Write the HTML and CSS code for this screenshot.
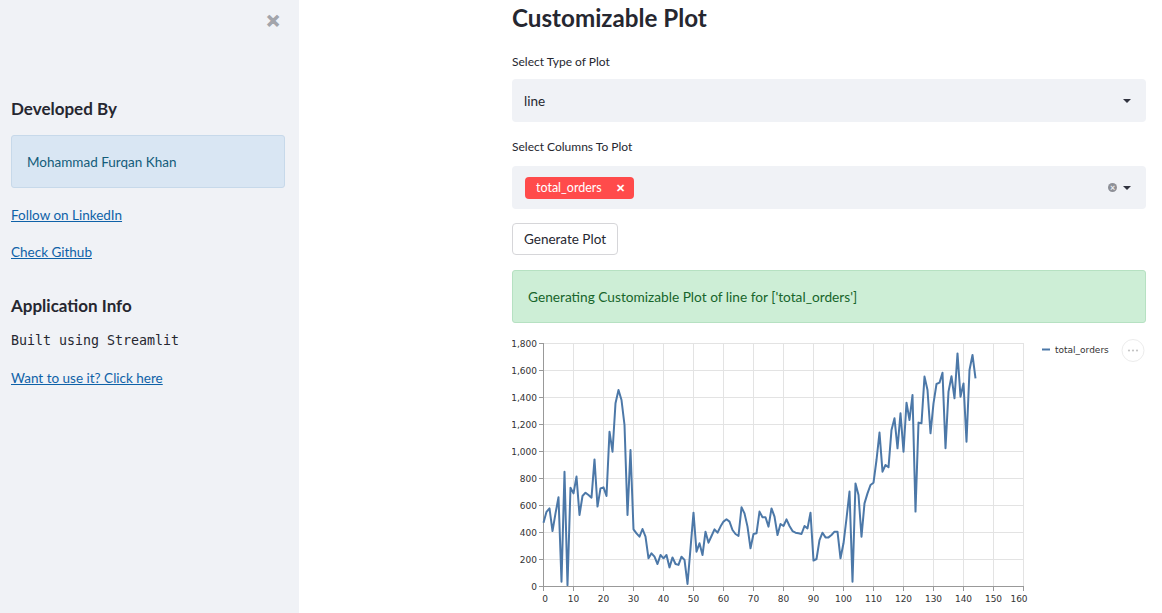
FILE: index.html
```html
<!DOCTYPE html>
<html>
<head>
<meta charset="utf-8">
<link rel="stylesheet" href="styles.css">
</head>
<body>
<aside class="sidebar">
  <div class="close-row"><span class="close">✕</span></div>
  <h3 class="sb-heading first">Developed By</h3>
  <div class="info-box">Mohammad Furqan Khan</div>
  <a class="sb-link first-link" href="#">Follow on LinkedIn</a>
  <a class="sb-link" href="#">Check Github</a>
  <h3 class="sb-heading second">Application Info</h3>
  <code class="mono">Built using Streamlit</code>
  <a class="sb-link" href="#">Want to use it? Click here</a>
</aside>
<main class="main">
  <h1 class="title">Customizable Plot</h1>
  <label class="field-label first">Select Type of Plot</label>
  <div class="select">
    <span class="select-value">line</span>
    <span class="caret"></span>
  </div>
  <label class="field-label">Select Columns To Plot</label>
  <div class="select multi">
    <span class="tag">total_orders<span class="tag-x">✕</span></span>
    <span class="controls"><span class="clear">×</span><span class="caret"></span></span>
  </div>
  <button class="btn">Generate Plot</button>
  <div class="success">Generating Customizable Plot of line for ['total_orders']</div>
  <div class="chart">
    <svg width="634" height="280" viewBox="0 0 634 280" xmlns="http://www.w3.org/2000/svg">
      <g stroke="#e3e3e3" stroke-width="1">
        <line x1="61.5" y1="10" x2="61.5" y2="253"/>
        <line x1="91.5" y1="10" x2="91.5" y2="253"/>
        <line x1="121.5" y1="10" x2="121.5" y2="253"/>
        <line x1="151.5" y1="10" x2="151.5" y2="253"/>
        <line x1="181.5" y1="10" x2="181.5" y2="253"/>
        <line x1="211.5" y1="10" x2="211.5" y2="253"/>
        <line x1="241.5" y1="10" x2="241.5" y2="253"/>
        <line x1="271.5" y1="10" x2="271.5" y2="253"/>
        <line x1="301.5" y1="10" x2="301.5" y2="253"/>
        <line x1="331.5" y1="10" x2="331.5" y2="253"/>
        <line x1="361.5" y1="10" x2="361.5" y2="253"/>
        <line x1="391.5" y1="10" x2="391.5" y2="253"/>
        <line x1="421.5" y1="10" x2="421.5" y2="253"/>
        <line x1="451.5" y1="10" x2="451.5" y2="253"/>
        <line x1="481.5" y1="10" x2="481.5" y2="253"/>
        <line x1="511.5" y1="10" x2="511.5" y2="253"/>
        <line x1="31.5" y1="10.5" x2="511.5" y2="10.5"/>
        <line x1="31.5" y1="37.5" x2="511.5" y2="37.5"/>
        <line x1="31.5" y1="64.5" x2="511.5" y2="64.5"/>
        <line x1="31.5" y1="91.5" x2="511.5" y2="91.5"/>
        <line x1="31.5" y1="118.5" x2="511.5" y2="118.5"/>
        <line x1="31.5" y1="145.5" x2="511.5" y2="145.5"/>
        <line x1="31.5" y1="172.5" x2="511.5" y2="172.5"/>
        <line x1="31.5" y1="199.5" x2="511.5" y2="199.5"/>
        <line x1="31.5" y1="226.5" x2="511.5" y2="226.5"/>
      </g>
      <g stroke="#999" stroke-width="1">
        <line x1="31.5" y1="10" x2="31.5" y2="253.5"/>
        <line x1="31" y1="253.5" x2="512" y2="253.5"/>
        <line x1="27" y1="10.5" x2="31.5" y2="10.5"/>
        <line x1="27" y1="37.5" x2="31.5" y2="37.5"/>
        <line x1="27" y1="64.5" x2="31.5" y2="64.5"/>
        <line x1="27" y1="91.5" x2="31.5" y2="91.5"/>
        <line x1="27" y1="118.5" x2="31.5" y2="118.5"/>
        <line x1="27" y1="145.5" x2="31.5" y2="145.5"/>
        <line x1="27" y1="172.5" x2="31.5" y2="172.5"/>
        <line x1="27" y1="199.5" x2="31.5" y2="199.5"/>
        <line x1="27" y1="226.5" x2="31.5" y2="226.5"/>
        <line x1="27" y1="253.5" x2="31.5" y2="253.5"/>
        <line x1="31.5" y1="253.5" x2="31.5" y2="258"/>
        <line x1="61.5" y1="253.5" x2="61.5" y2="258"/>
        <line x1="91.5" y1="253.5" x2="91.5" y2="258"/>
        <line x1="121.5" y1="253.5" x2="121.5" y2="258"/>
        <line x1="151.5" y1="253.5" x2="151.5" y2="258"/>
        <line x1="181.5" y1="253.5" x2="181.5" y2="258"/>
        <line x1="211.5" y1="253.5" x2="211.5" y2="258"/>
        <line x1="241.5" y1="253.5" x2="241.5" y2="258"/>
        <line x1="271.5" y1="253.5" x2="271.5" y2="258"/>
        <line x1="301.5" y1="253.5" x2="301.5" y2="258"/>
        <line x1="331.5" y1="253.5" x2="331.5" y2="258"/>
        <line x1="361.5" y1="253.5" x2="361.5" y2="258"/>
        <line x1="391.5" y1="253.5" x2="391.5" y2="258"/>
        <line x1="421.5" y1="253.5" x2="421.5" y2="258"/>
        <line x1="451.5" y1="253.5" x2="451.5" y2="258"/>
        <line x1="481.5" y1="253.5" x2="481.5" y2="258"/>
        <line x1="511.5" y1="253.5" x2="511.5" y2="258"/>
      </g>
      <g class="axis-text" text-anchor="end">
        <text x="25" y="14">1,800</text>
        <text x="25" y="41">1,600</text>
        <text x="25" y="68">1,400</text>
        <text x="25" y="95">1,200</text>
        <text x="25" y="122">1,000</text>
        <text x="25" y="149">800</text>
        <text x="25" y="176">600</text>
        <text x="25" y="203">400</text>
        <text x="25" y="230">200</text>
        <text x="25" y="257">0</text>
      </g>
      <g class="axis-text" text-anchor="middle">
        <text x="33" y="269">0</text>
        <text x="61.5" y="269">10</text>
        <text x="91.5" y="269">20</text>
        <text x="121.5" y="269">30</text>
        <text x="151.5" y="269">40</text>
        <text x="181.5" y="269">50</text>
        <text x="211.5" y="269">60</text>
        <text x="241.5" y="269">70</text>
        <text x="271.5" y="269">80</text>
        <text x="301.5" y="269">90</text>
        <text x="331.5" y="269">100</text>
        <text x="361.5" y="269">110</text>
        <text x="391.5" y="269">120</text>
        <text x="421.5" y="269">130</text>
        <text x="451.5" y="269">140</text>
        <text x="481.5" y="269">150</text>
        <text x="507" y="269">160</text>
      </g>
      <polyline fill="none" stroke="#4c78a8" stroke-width="2" stroke-linejoin="round" points="31.5,189.7 34.5,178.8 37.5,175.4 40.5,198.1 43.5,180.4 46.5,164.3 49.5,248.7 52.5,138.7 55.5,252.1 58.5,154.7 61.5,160.4 64.5,143.6 67.5,182 70.5,163 73.5,159.7 76.5,162 79.5,164.7 82.5,126.4 85.5,173.6 88.5,155.4 91.5,154.4 94.5,163 97.5,98.7 100.5,118.7 103.5,70.3 106.5,57 109.5,67 112.5,92 115.5,182 118.5,117 121.5,196.3 124.5,200.3 127.5,203.7 130.5,196 133.5,203.7 136.5,225.3 139.5,220.3 142.5,223.7 145.5,231 148.5,222 151.5,225.3 154.5,222 157.5,234.4 160.5,224.4 163.5,231 166.5,231.9 169.5,223.7 172.5,226.9 175.5,251 178.5,215.3 181.5,179.7 184.5,218.7 187.5,210.3 190.5,222 193.5,198.7 196.5,209.7 199.5,203 202.5,196.3 205.5,199.7 208.5,193.6 211.5,188.6 214.5,186.3 217.5,188.6 220.5,197 223.5,201 226.5,203 229.5,174.3 232.5,180.4 235.5,193.6 238.5,215.3 241.5,201 244.5,200.3 247.5,178.6 250.5,184.3 253.5,184.3 256.5,193.6 259.5,175.4 262.5,183.6 265.5,202 268.5,191 271.5,193 274.5,186.3 277.5,193 280.5,198.1 283.5,199.7 286.5,200.3 289.5,201 292.5,193 295.5,195.4 298.5,179.7 301.5,227.6 304.5,226 307.5,207.1 310.5,199.7 313.5,204.4 316.5,204.4 319.5,202 322.5,198.7 325.5,198.7 328.5,225.3 331.5,210.3 334.5,185.5 337.5,158.6 340.5,248.7 343.5,150.4 346.5,162 349.5,203.7 352.5,170.4 355.5,160.4 358.5,152 361.5,149.7 364.5,127 367.5,99.6 370.5,138.7 373.5,132 376.5,134.3 379.5,96.9 382.5,85.3 385.5,115.3 388.5,80.3 391.5,118.7 394.5,69.7 397.5,87 400.5,62 403.5,178.6 406.5,89.6 409.5,90.3 412.5,43.6 415.5,57 418.5,100.3 421.5,70.3 424.5,51 427.5,49.7 430.5,39.7 433.5,115.3 436.5,58.6 439.5,43.3 442.5,65.3 445.5,20.4 448.5,63.7 451.5,50.4 454.5,108.7 457.5,37 460.5,22 463.5,45.4"/>
      <line x1="530" y1="16.5" x2="538" y2="16.5" stroke="#4c78a8" stroke-width="2"/>
      <text class="legend-text" x="543" y="20">total_orders</text>
      <circle cx="621" cy="17.5" r="11" fill="#fff" stroke="#ececec" stroke-width="1"/>
      <g fill="#c4c4c4">
        <circle cx="617" cy="17.5" r="1.1"/>
        <circle cx="621" cy="17.5" r="1.1"/>
        <circle cx="625" cy="17.5" r="1.1"/>
      </g>
    </svg>
  </div>
</main>
</body>
</html>
```
FILE: styles.css
```css
* { box-sizing: border-box; }
html, body { margin: 0; padding: 0; }
body {
  display: flex;
  width: 1162px;
  height: 613px;
  overflow: hidden;
  background: #fff;
  font-family: "Lato", "Open Sans", sans-serif;
  color: #262730;
}
.sidebar {
  width: 299px;
  flex: 0 0 299px;
  height: 613px;
  background: #f0f2f6;
  padding: 0 14px 0 11px;
  display: flex;
  flex-direction: column;
  align-items: flex-start;
}
.close-row {
  height: 40px;
  width: 100%;
  display: flex;
  justify-content: flex-end;
  align-items: center;
  padding-right: 5px;
}
.close {
  color: #a3a5ab;
  font-size: 17px;
  font-weight: 700;
  line-height: 17px;
  -webkit-text-stroke: 1px #a3a5ab;
}
.sb-heading {
  margin: 0;
  font-size: 17px;
  font-weight: 700;
  line-height: 24px;
  color: #262730;
}
.sb-heading.first { margin-top: 57px; }
.sb-heading.second { margin-top: 32px; }
.info-box {
  margin-top: 14px;
  width: 274px;
  height: 53px;
  background: #d9e6f3;
  border: 1px solid #c7d9ea;
  border-radius: 3px;
  padding: 0 15px;
  display: flex;
  align-items: center;
  font-size: 13.5px;
  color: #135c7a;
}
.sb-link {
  display: block;
  margin-top: 17px;
  font-size: 13.5px;
  line-height: 20px;
  color: #0f62a8;
  text-decoration: underline;
}
.mono {
  display: block;
  margin-top: 13px;
  font-family: "DejaVu Sans Mono", "Liberation Mono", monospace;
  font-size: 13.3px;
  line-height: 20px;
  color: #262730;
}
.main {
  flex: 1;
  padding: 0 16px 0 213px;
  display: flex;
  flex-direction: column;
  align-items: flex-start;
}
.title {
  margin: 0;
  font-size: 24.2px;
  font-weight: 700;
  line-height: 36px;
  color: #262730;
}
.field-label {
  display: block;
  margin-top: 17px;
  font-size: 12px;
  line-height: 16px;
  color: #262730;
}
.field-label.first { margin-top: 18px; }
.select {
  width: 634px;
  height: 43px;
  margin-top: 9px;
  background: #f0f2f6;
  border-radius: 4px;
  display: flex;
  align-items: center;
  justify-content: space-between;
  padding: 0 15px 0 12px;
}
.select.multi { margin-top: 11px; padding-left: 13px; }
.select-value { font-size: 13.5px; color: #262730; }
.caret {
  width: 0;
  height: 0;
  border-left: 4px solid transparent;
  border-right: 4px solid transparent;
  border-top: 4px solid #31333f;
}
.tag {
  height: 22px;
  width: 109px;
  background: #ff4b4b;
  border-radius: 4px;
  color: #fff;
  font-size: 12.5px;
  display: flex;
  align-items: center;
  padding: 0 9px 0 11px;
  justify-content: space-between;
}
.tag-x { font-size: 11px; font-weight: 700; }
.controls { display: flex; align-items: center; gap: 6px; }
.clear {
  width: 9px;
  height: 9px;
  border-radius: 50%;
  background: #8e9097;
  color: #f0f2f6;
  font-size: 9px;
  font-weight: 700;
  line-height: 9px;
  text-align: center;
}
.btn {
  margin-top: 14px;
  height: 32px;
  width: 106px;
  background: #fff;
  border: 1px solid #d6d6d9;
  border-radius: 4px;
  font-family: inherit;
  font-size: 13.5px;
  color: #262730;
  padding: 0;
}
.success {
  margin-top: 15px;
  width: 634px;
  height: 53px;
  background: #cdeed6;
  border: 1px solid #b6e1c2;
  border-radius: 3px;
  display: flex;
  align-items: center;
  padding: 0 15px;
  font-size: 13.7px;
  color: #17652b;
}
.chart { margin-top: 10px; height: 280px; }
.chart svg { display: block; }
.axis-text { font-family: "DejaVu Sans", "Liberation Sans", sans-serif; font-size: 9px; fill: #333; }
.legend-text { font-family: "DejaVu Sans", "Liberation Sans", sans-serif; font-size: 9px; fill: #333; }
```
